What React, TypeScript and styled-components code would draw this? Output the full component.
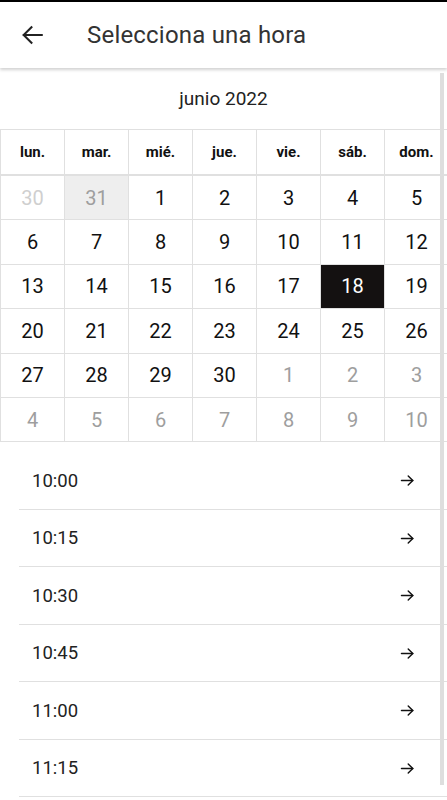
import React from 'react'
import styled, { createGlobalStyle, css } from 'styled-components'

const GlobalStyle = createGlobalStyle`
  html, body {
    margin: 0;
    padding: 0;
    background: #ffffff;
    font-family: Roboto, "Noto Sans", Arial, sans-serif;
    overflow: hidden;
  }
`

const Screen = styled.div`
  position: relative;
  width: 447px;
  height: 800px;
  border-top: 2px solid #000;
  box-sizing: border-box;
  overflow: hidden;
  background: #fff;
`

const TopBar = styled.header`
  position: relative;
  z-index: 2;
  display: flex;
  align-items: center;
  height: 66px;
  padding-left: 19px;
  background: #fff;
  box-shadow: 0 2px 3px rgba(0, 0, 0, 0.18);
`

const BackButton = styled.button`
  display: flex;
  align-items: center;
  justify-content: center;
  width: 26px;
  height: 26px;
  padding: 0;
  border: none;
  background: none;
  color: #222;
`

const Title = styled.h1`
  margin: 0 0 0 42px;
  font-size: 24px;
  font-weight: 400;
  color: #333;
  letter-spacing: 0.2px;
`

const MonthTitle = styled.div`
  height: 61px;
  display: flex;
  align-items: center;
  justify-content: center;
  font-size: 19px;
  color: #222;
`

const Grid = styled.div`
  display: grid;
  grid-template-columns: repeat(7, 64px);
  width: 448px;
  border-top: 1px solid #e0e0e0;
  border-left: 1px solid #e0e0e0;
`

const WeekDay = styled.div`
  height: 44px;
  display: flex;
  align-items: center;
  justify-content: center;
  font-size: 15px;
  font-weight: 700;
  color: #111;
  border-right: 1px solid #e0e0e0;
  border-bottom: 2px solid #e0e0e0;
`

type DayKind = 'current' | 'faded' | 'other' | 'past' | 'selected'

const Day = styled.div<{ $kind: DayKind }>`
  height: 43.4px;
  display: flex;
  align-items: center;
  justify-content: center;
  font-size: 20px;
  color: #111;
  border-right: 1px solid #e0e0e0;
  border-bottom: 1px solid #e0e0e0;
  ${({ $kind }) =>
    $kind === 'faded' &&
    css`
      color: #cfcfcf;
    `}
  ${({ $kind }) =>
    $kind === 'other' &&
    css`
      color: #9e9e9e;
    `}
  ${({ $kind }) =>
    $kind === 'past' &&
    css`
      color: #9e9e9e;
      background: #eeeeee;
    `}
  ${({ $kind }) =>
    $kind === 'selected' &&
    css`
      color: #fff;
      background: #141111;
    `}
`

const TimeList = styled.ul`
  list-style: none;
  margin: 10px 0 0 19px;
  padding: 0;
`

const TimeRow = styled.li`
  display: flex;
  align-items: center;
  justify-content: space-between;
  height: 56.5px;
  padding: 0 31px 0 13px;
  border-bottom: 1.5px solid #e0e0e0;
  font-size: 18.5px;
  color: #222;
`

const ScrollThumb = styled.div`
  position: absolute;
  z-index: 3;
  top: 71px;
  right: 3px;
  width: 4px;
  height: 712px;
  background: #dedede;
`

const weekDays = ['lun.', 'mar.', 'mié.', 'jue.', 'vie.', 'sáb.', 'dom.']

const days: { n: number; kind: DayKind }[] = [
  { n: 30, kind: 'faded' },
  { n: 31, kind: 'past' },
  ...Array.from({ length: 30 }, (_, i) => ({
    n: i + 1,
    kind: (i + 1 === 18 ? 'selected' : 'current') as DayKind,
  })),
  ...Array.from({ length: 10 }, (_, i) => ({ n: i + 1, kind: 'other' as DayKind })),
]

const times = ['10:00', '10:15', '10:30', '10:45', '11:00', '11:15']

function ArrowBack() {
  return (
    <svg width="26" height="26" viewBox="0 0 24 24" fill="none" stroke="currentColor" strokeWidth="1.9" strokeLinecap="square">
      <path d="M21 12H4.5" />
      <path d="M11.5 4.8L4.3 12l7.2 7.2" />
    </svg>
  )
}

function ArrowForward() {
  return (
    <svg width="17" height="17" viewBox="0 0 24 24" fill="none" stroke="#111" strokeWidth="2" strokeLinecap="round" strokeLinejoin="round">
      <path d="M3.5 12h16" />
      <path d="M13 5.5l6.5 6.5-6.5 6.5" />
    </svg>
  )
}

export default function App() {
  return (
    <Screen>
      <GlobalStyle />
      <TopBar>
        <BackButton aria-label="Atrás">
          <ArrowBack />
        </BackButton>
        <Title>Selecciona una hora</Title>
      </TopBar>

      <MonthTitle>junio 2022</MonthTitle>
      <Grid>
        {weekDays.map((d) => (
          <WeekDay key={d}>{d}</WeekDay>
        ))}
        {days.map((d, i) => (
          <Day key={i} $kind={d.kind}>
            {d.n}
          </Day>
        ))}
      </Grid>

      <TimeList>
        {times.map((t) => (
          <TimeRow key={t}>
            <span>{t}</span>
            <ArrowForward />
          </TimeRow>
        ))}
      </TimeList>
      <ScrollThumb />
    </Screen>
  )
}
